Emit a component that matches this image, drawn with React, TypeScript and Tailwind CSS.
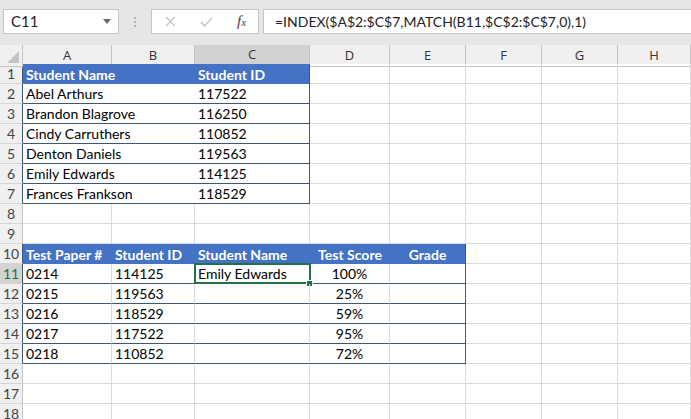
import React from 'react'

const COLS = ['A', 'B', 'C', 'D', 'E', 'F', 'G', 'H']
const GRID = 'grid grid-cols-[23px_89px_83px_115px_80px_76px_76px_76px_73px]'
const DARK = 'border-[#3d5877]'

const students = [
  ['Abel Arthurs', '117522'],
  ['Brandon Blagrove', '116250'],
  ['Cindy Carruthers', '110852'],
  ['Denton Daniels', '119563'],
  ['Emily Edwards', '114125'],
  ['Frances Frankson', '118529'],
]

const papers = [
  ['0214', '114125', 'Emily Edwards', '100%'],
  ['0215', '119563', '', '25%'],
  ['0216', '118529', '', '59%'],
  ['0217', '117522', '', '95%'],
  ['0218', '110852', '', '72%'],
]

const RowHead: React.FC<{ n: number; table?: boolean; active?: boolean }> = ({ n, table, active }) => (
  <div
    className={`h-5 flex items-center justify-center border-b border-r border-b-[#d6d6d6] text-[14px] ${
      table ? DARK : 'border-r-[#c4c4c4]'
    } ${active ? 'bg-[#d3d3d3] text-[#217346]' : 'bg-[#f0f0f0] text-[#444]'}`}
  >
    {n}
  </div>
)

const Blank: React.FC = () => <div className="h-5 border-b border-r border-[#dadada]" />

const FormulaBar: React.FC = () => (
  <div className="h-[45px] bg-[#e6e6e6] flex items-start pt-[9px] text-[14px] text-[#222]">
    {/* name box */}
    <div className="ml-[3px] w-[116px] h-[25px] bg-white border border-[#c6c6c6] flex items-center justify-between pl-[7px] pr-[7px]">
      <span className="text-[15px]">C11</span>
      <svg width="8" height="5" viewBox="0 0 8 5">
        <path d="M0 0 L8 0 L4 5 Z" fill="#6b6b6b" />
      </svg>
    </div>
    <div className="w-[32px] h-[25px] flex flex-col items-center justify-center gap-[2px]">
      <span className="w-[2px] h-[2px] bg-[#b5b5b5]" />
      <span className="w-[2px] h-[2px] bg-[#b5b5b5]" />
      <span className="w-[2px] h-[2px] bg-[#b5b5b5]" />
    </div>
    {/* cancel / enter / fx */}
    <div className="w-[108px] h-[25px] bg-white border border-[#c6c6c6] flex items-center">
      <svg className="ml-[13px]" width="11" height="11" viewBox="0 0 11 11">
        <path d="M1 1 L10 10 M10 1 L1 10" stroke="#c2c2c2" strokeWidth="1.4" />
      </svg>
      <svg className="ml-[24px]" width="13" height="10" viewBox="0 0 13 10">
        <path d="M1 5 L4.5 9 L12 1" stroke="#c2c2c2" strokeWidth="1.4" fill="none" />
      </svg>
      <span className="ml-[24px] font-['Liberation_Serif',serif] italic text-[15px] text-[#444] leading-none">
        f<span className="text-[11px]">x</span>
      </span>
    </div>
    <div className="ml-[4px] flex-1 h-[25px] bg-white border border-r-0 border-[#c6c6c6] flex items-center pl-[11px] whitespace-nowrap">
      =INDEX($A$2:$C$7,MATCH(B11,$C$2:$C$7,0),1)
    </div>
  </div>
)

export default function App() {
  return (
    <div className="w-[691px] h-[419px] overflow-hidden bg-white font-['Lato','Liberation_Sans',sans-serif] text-[14px] text-black">
      <FormulaBar />

      {/* column headers */}
      <div className={`${GRID} h-[19px] bg-[#f0f0f0] text-[13px] text-[#333] font-['Open_Sans',sans-serif]`}>
        <div className="relative border-r border-b border-[#c4c4c4]">
          <svg className="absolute right-[3px] bottom-[3px]" width="12" height="12" viewBox="0 0 12 12">
            <path d="M12 0 L12 12 L0 12 Z" fill="#c4c4c4" />
          </svg>
        </div>
        {COLS.map((c) => (
          <div
            key={c}
            className={`flex items-center justify-center border-r border-[#c4c4c4] ${
              c === 'C' ? 'bg-[#d2d2d2] border-b-2 border-b-[#8fa596]' : 'border-b'
            }`}
          >
            {c}
          </div>
        ))}
      </div>

      {/* row 1 — table header */}
      <div className={GRID}>
        <RowHead n={1} table />
        <div className="col-span-2 h-5 bg-[#4472c4] text-white font-bold pl-[3px] flex items-center">Student Name</div>
        <div className={`h-5 bg-[#4472c4] text-white font-bold pl-[3px] flex items-center border-r ${DARK}`}>Student ID</div>
        {[0, 1, 2, 3, 4].map((i) => <Blank key={i} />)}
      </div>

      {/* rows 2-7 */}
      {students.map(([name, id], i) => (
        <div key={id} className={GRID}>
          <RowHead n={i + 2} table />
          <div className={`col-span-2 h-5 pl-[3px] flex items-center border-b ${DARK}`}>{name}</div>
          <div className={`h-5 pl-[3px] flex items-center border-b border-r ${DARK}`}>{id}</div>
          {[0, 1, 2, 3, 4].map((k) => <Blank key={k} />)}
        </div>
      ))}

      {/* rows 8-9 */}
      {[8, 9].map((n) => (
        <div key={n} className={GRID}>
          <RowHead n={n} />
          {COLS.map((c) => <Blank key={c} />)}
        </div>
      ))}

      {/* row 10 — table header */}
      <div className={GRID}>
        <RowHead n={10} table />
        <div className="h-5 bg-[#4472c4] text-white font-bold pl-[3px] flex items-center whitespace-nowrap">Test Paper #</div>
        <div className="h-5 bg-[#4472c4] text-white font-bold pl-[3px] flex items-center">Student ID</div>
        <div className="h-5 bg-[#4472c4] text-white font-bold pl-[3px] flex items-center">Student Name</div>
        <div className="h-5 bg-[#4472c4] text-white font-bold flex items-center justify-center">Test Score</div>
        <div className={`h-5 bg-[#4472c4] text-white font-bold flex items-center justify-center border-r ${DARK}`}>Grade</div>
        {[0, 1, 2].map((k) => <Blank key={k} />)}
      </div>

      {/* rows 11-15 */}
      {papers.map(([paper, id, name, score], i) => (
        <div key={paper} className={GRID}>
          <RowHead n={i + 11} table active={i === 0} />
          <div className={`h-5 pl-[3px] flex items-center border-b border-r border-r-[#dadada] ${DARK}`}>{paper}</div>
          <div className={`h-5 pl-[3px] flex items-center border-b border-r border-r-[#dadada] ${DARK}`}>{id}</div>
          <div className={`relative h-5 pl-[3px] flex items-center border-b border-r border-r-[#dadada] ${DARK}`}>
            {name}
            {i === 0 && (
              <>
                <div className="absolute -left-px -top-px w-[117px] h-[21px] border-2 border-[#217346]" />
                <div className="absolute -right-[4px] -bottom-[4px] w-[7px] h-[7px] bg-[#217346] border border-white" />
              </>
            )}
          </div>
          <div className={`h-5 flex items-center justify-center border-b border-r border-r-[#dadada] ${DARK}`}>{score}</div>
          <div className={`h-5 border-b border-r ${DARK}`} />
          {[0, 1, 2].map((k) => <Blank key={k} />)}
        </div>
      ))}

      {/* rows 16-18 */}
      {[16, 17, 18].map((n) => (
        <div key={n} className={GRID}>
          <RowHead n={n} />
          {COLS.map((c) => <Blank key={c} />)}
        </div>
      ))}
    </div>
  )
}
